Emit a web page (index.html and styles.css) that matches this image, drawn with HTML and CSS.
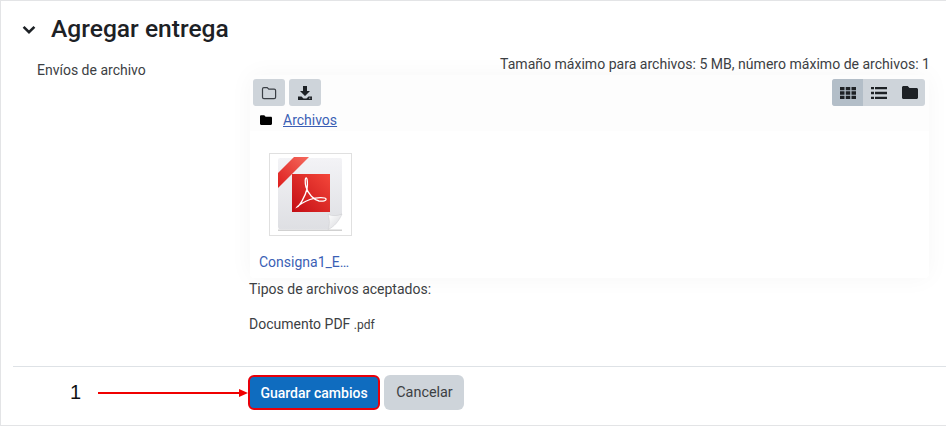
FILE: index.html
```html
<!DOCTYPE html>
<html lang="es">
<head>
<meta charset="utf-8">
<title>Agregar entrega</title>
<link rel="stylesheet" href="styles.css">
</head>
<body>
<main class="page">
  <h2 class="heading">
    <svg class="chevron" viewBox="0 0 14 10" width="14" height="10"><path d="M1.600 1.800 7 7.200l5.400-5.400" fill="none" stroke="#1d2125" stroke-width="2.600"/></svg>
    <span>Agregar entrega</span>
  </h2>
  <div class="row">
    <div class="label">Envíos de archivo</div>
    <div class="field">
      <div class="limits">Tamaño máximo para archivos: 5 MB, número máximo de archivos: 1</div>
      <div class="manager">
        <div class="top">
          <div class="toolbar">
            <div class="tools">
              <button class="tool" type="button" aria-label="Crear carpeta">
                <svg viewBox="0 0 16 14" width="16" height="14"><path d="M1.500 3c0-.8.600-1.400 1.400-1.400h3.300l1.600 1.600h5.400c.8 0 1.400.6 1.400 1.400v6.600c0 .8-.6 1.400-1.400 1.400H2.900c-.8 0-1.400-.6-1.400-1.400z" fill="none" stroke="#3a3f45" stroke-width="1.200"/></svg>
              </button>
              <button class="tool" type="button" aria-label="Descargar">
                <svg viewBox="0 0 16 16" width="16" height="16"><path d="M6 1h4v5h3l-5 5-5-5h3zM1 11.500h3.500l2 2h3l2-2H15V15H1z" fill="#1d2125"/><path d="M12 13.200h1M13.600 13.200h.6" stroke="#ced4da" stroke-width=".8"/></svg>
              </button>
            </div>
            <div class="views">
              <span class="view active">
                <svg viewBox="0 0 16 12" width="16" height="12"><path d="M0 0h4.500v3.300H0zM5.750 0h4.500v3.300h-4.500zM11.500 0H16v3.300h-4.500zM0 4.350h4.500v3.300H0zM5.750 4.350h4.500v3.300h-4.500zM11.500 4.350H16v3.300h-4.500zM0 8.700h4.500V12H0zM5.750 8.700h4.500V12h-4.500zM11.500 8.700H16V12h-4.500z" fill="#1d2125"/></svg>
              </span>
              <span class="view">
                <svg viewBox="0 0 16 12" width="16" height="12"><path d="M0 0h3v2.300H0zM4 0h12v2.300H4zM0 4.850h3v2.300H0zM4 4.850h12v2.300H4zM0 9.700h3V12H0zM4 9.700h12V12H4z" fill="#1d2125"/></svg>
              </span>
              <span class="view">
                <svg viewBox="0 0 16 13" width="16" height="13"><path d="M0 1.500C0 .7.700 0 1.500 0h4.200L7.500 2h7c.8 0 1.500.7 1.500 1.500v8c0 .8-.7 1.500-1.500 1.500h-13C.7 13 0 12.300 0 11.500z" fill="#1d2125"/></svg>
              </span>
            </div>
          </div>
          <div class="path">
            <svg viewBox="0 0 16 13" width="12" height="10"><path d="M0 1.500C0 .7.700 0 1.500 0h4.200L7.500 2h7c.8 0 1.500.7 1.500 1.500v8c0 .8-.7 1.500-1.500 1.500h-13C.7 13 0 12.300 0 11.500z" fill="#000"/></svg>
            <a class="crumb" href="#">Archivos</a>
          </div>
        </div>
        <div class="files">
          <a class="file" href="#">
            <span class="thumb">
              <svg viewBox="0 0 80 80" width="80" height="80">
                <defs>
                  <linearGradient id="paper" x1="0" y1="0" x2="0" y2="1"><stop offset="0" stop-color="#f3f3f6"/><stop offset="1" stop-color="#dedfe3"/></linearGradient>
                  <linearGradient id="red" x1="1" y1="0" x2="0" y2="1"><stop offset="0" stop-color="#f4473a"/><stop offset="1" stop-color="#c30d14"/></linearGradient>
                  <linearGradient id="ribbon" x1="0" y1="1" x2="1" y2="0"><stop offset="0" stop-color="#dd1d1c"/><stop offset="1" stop-color="#f56a5e"/></linearGradient>
                  <linearGradient id="fold" x1="0" y1="0" x2="1" y2="1"><stop offset="0" stop-color="#ffffff"/><stop offset="1" stop-color="#d5d6da"/></linearGradient>
                </defs>
                <path d="M8 75.500h64v1.500H8z" fill="#bdbdbd" opacity=".7"/>
                <path d="M10 4h60a2 2 0 0 1 2 2v54L58 75.500H11a3 3 0 0 1-3-3V6a2 2 0 0 1 2-2z" fill="url(#paper)"/>
                <path d="M58 75.500c2-5 1.500-11 0-15 4 1.500 10 1.500 14-.5-3 7-8 13-14 15.500z" fill="url(#fold)" stroke="#c8c9cd" stroke-width=".5"/>
                <path d="M24 3h15L8 34V19z" fill="url(#ribbon)"/>
                <rect x="22" y="20" width="38" height="38" fill="url(#red)"/>
                <path d="M27 53c2.500-1 8-10 10-18 1-5 .2-11-.8-11s-1.500 4-.2 9c2 7 8 13 13 14 4 .6 7.500-.2 7-2-.6-2-9-2-16 .5-6 2-12 6-13 7.500z" fill="none" stroke="#fff" stroke-width="1.300"/>
              </svg>
            </span>
            <span class="name">Consigna1_E…</span>
          </a>
        </div>
      </div>
      <div class="types">Tipos de archivos aceptados:</div>
      <div class="type">Documento PDF <small>.pdf</small></div>
    </div>
  </div>
  <div class="actions">
    <span class="step">1</span>
    <svg class="arrow" viewBox="0 0 150 8" width="150" height="8"><path d="M0 3h143v2H0z" fill="#f00000"/><path d="M141 0l9 4-9 4z" fill="#f00000"/></svg>
    <button class="btn primary" type="button">Guardar cambios</button>
    <button class="btn secondary" type="button">Cancelar</button>
  </div>
</main>
</body>
</html>
```
FILE: styles.css
```css
* { box-sizing: border-box; }
html, body { margin: 0; padding: 0; }
body { width: 946px; height: 426px; overflow: hidden; background: #fff; font-family: Roboto, "Liberation Sans", sans-serif; color: #3c4043; }
.page { width: 946px; height: 426px; border: 1px solid #e3e4e6; border-right: 0; padding: 12px 0 0 12px; }
.heading { display: flex; align-items: center; margin: 0; height: 30px; padding-left: 9px; font-size: 24.600px; font-weight: 500; color: #1d2125; }
.chevron { margin-right: 15px; margin-top: 4px; }
.row { display: flex; margin-top: 10px; height: 314px; border-bottom: 1px solid #dee2e6; }
.label { width: 236px; padding: 7px 0 0 24px; font-size: 14px; line-height: 20px; color: #3c4043; }
.field { width: 681px; }
.limits { text-align: right; padding-top: 2px; height: 22px; font-size: 14.060px; line-height: 19px; color: #3c4043; white-space: nowrap; }
.manager { margin-left: 1px; width: 679px; height: 203px; background: #fff; border-radius: 4px; box-shadow: 0 0 24px rgba(0,0,0,.04); }
.top { height: 56px; background: #fdfdfd; padding: 4px 4px 0 3px; border-radius: 4px 4px 0 0; }
.toolbar { display: flex; justify-content: space-between; }
.tools { display: flex; gap: 4px; }
.tool { display: flex; align-items: center; justify-content: center; width: 32px; height: 27px; padding: 0; border: 0; border-radius: 3px; background: #ced4da; }
.views { display: flex; height: 27px; border-radius: 3px; overflow: hidden; background: #ced4da; }
.view { display: flex; align-items: center; justify-content: center; width: 31px; }
.view.active { background: #b3bec8; }
.path { display: flex; align-items: center; height: 27px; padding-left: 7px; gap: 11px; }
.crumb { font-size: 14px; color: #3b5fb5; text-decoration: underline; }
.files { padding-top: 22px; padding-left: 9px; }
.file { display: block; width: 96px; text-decoration: none; }
.thumb { display: block; width: 83px; height: 83px; margin-left: 10px; padding: 0; border: 1px solid #e0e0e0; }
.name { display: block; margin-top: 16px; font-size: 14px; line-height: 20px; color: #3b5fb5; white-space: nowrap; }
.types { height: 36px; padding-top: 1px; font-size: 14px; line-height: 20px; color: #3c4043; }
.type { font-size: 14px; line-height: 20px; color: #3c4043; }
.type small { font-size: 12px; }
.actions { display: flex; align-items: center; height: 35px; margin-top: 8px; padding-left: 57px; }
.step { width: 28px; font-family: "Liberation Sans", sans-serif; font-size: 20px; color: #111; }
.btn { height: 35px; border-radius: 6px; font-family: Roboto, "Liberation Sans", sans-serif; font-size: 14.400px; padding: 0; }
.primary { width: 132px; background: #0f6cbf; color: #fff; font-weight: 500; font-size: 14px; border: 2px solid #e8000b; }
.secondary { width: 80px; margin-left: 4px; padding-left: 1px; background: #ced4da; color: #3c4043; border: 0; }
```
